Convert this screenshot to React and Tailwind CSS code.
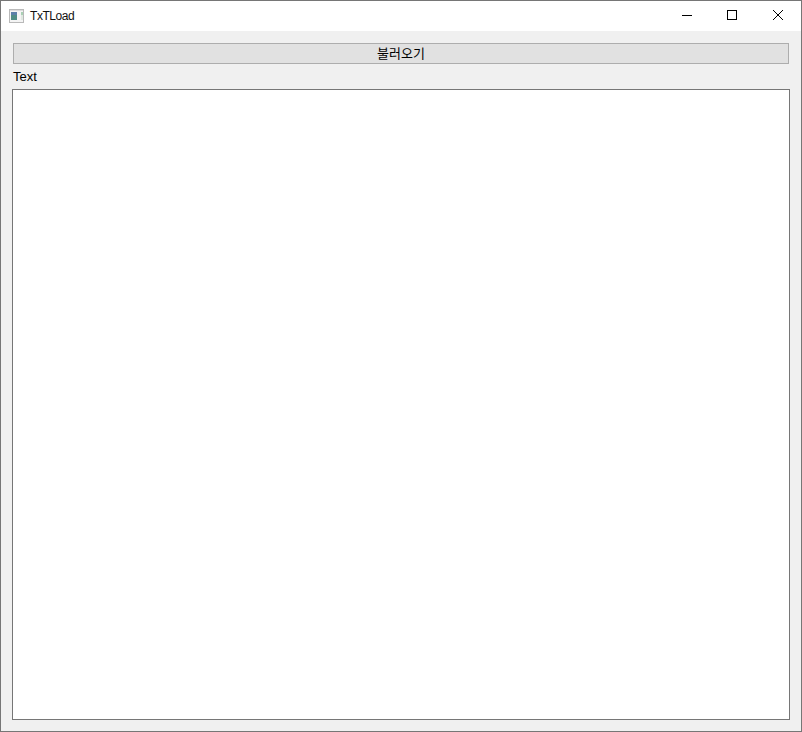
export default function App() {
  return (
    <div className="w-[802px] h-[732px] flex flex-col border border-[#767676] bg-[#f0f0f0] text-black overflow-hidden" style={{ fontFamily: '"Liberation Sans", "Noto Sans CJK KR", sans-serif' }}>
      <div className="h-[30px] shrink-0 bg-white flex items-center">
        <svg className="ml-[8px] shrink-0" width="15" height="14" viewBox="0 0 15 14">
          <rect x="0.5" y="0.5" width="14" height="13" fill="#f4f4f4" stroke="#b9b9b9" />
          <rect x="1" y="1" width="13" height="1" fill="#dcdcdc" />
          <rect x="2" y="3" width="6" height="3" fill="#5b7fa8" />
          <rect x="2" y="6" width="6" height="5" fill="#4f8c84" />
          <rect x="12" y="3" width="2" height="3" fill="#a9d0b4" />
          <rect x="12" y="6" width="2" height="5" fill="#dfe8e0" />
        </svg>
        <span className="ml-[6px] text-[12px] tracking-[-0.45px] leading-[16px] text-[#111]">TxTLoad</span>
        <div className="ml-auto flex h-full items-center">
          <div className="w-[46px] h-full flex items-center justify-center pb-[2px]">
            <svg className="ml-[2px]" width="10" height="10" viewBox="0 0 10 10"><path d="M0 5.5H10" stroke="#000" strokeWidth="1" /></svg>
          </div>
          <div className="w-[46px] h-full flex items-center justify-center pb-[2px]">
            <svg width="10" height="10" viewBox="0 0 10 10"><rect x="0.5" y="0.5" width="9" height="9" fill="none" stroke="#000" /></svg>
          </div>
          <div className="w-[46px] h-full flex items-center justify-center pb-[2px]">
            <svg width="10" height="10" viewBox="0 0 10 10"><path d="M0 0L10 10M10 0L0 10" stroke="#000" strokeWidth="1" /></svg>
          </div>
        </div>
      </div>
      <div className="flex-1 flex flex-col px-[11px] pt-[12px] pb-[11px] min-h-0">
        <button className="mx-px h-[21px] shrink-0 bg-[#e1e1e1] border border-[#adadad] text-[13px] leading-[19px] text-center">불러오기</button>
        <div className="mx-px mt-[5px] h-[16px] text-[13px] leading-[16px] shrink-0">Text</div>
        <div className="mt-[4px] flex-1 bg-white border border-[#767676]"></div>
      </div>
    </div>
  );
}
